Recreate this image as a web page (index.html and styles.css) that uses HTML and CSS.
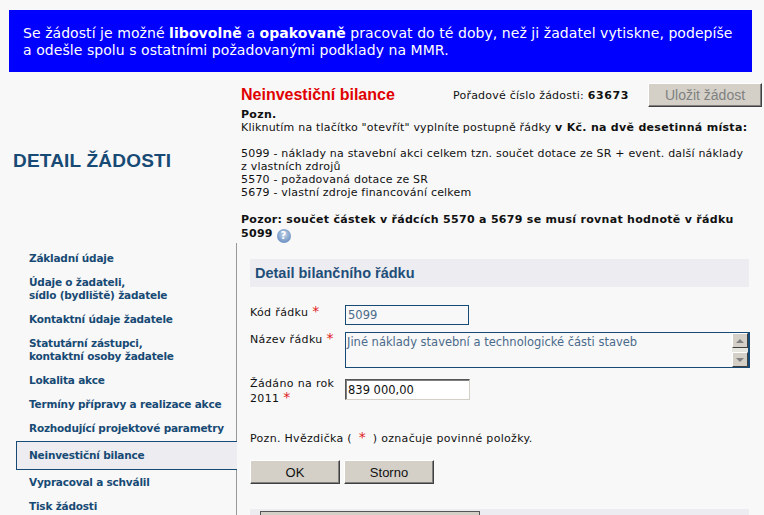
FILE: index.html
```html
<!DOCTYPE html>
<html lang="cs">
<head>
<meta charset="utf-8">
<title>Detail žádosti</title>
<link rel="stylesheet" href="styles.css">
</head>
<body>
<div class="banner">Se žádostí je možné <b>libovolně</b> a <b>opakovaně</b> pracovat do té doby, než ji žadatel vytiskne, podepíše<br>a odešle spolu s ostatními požadovanými podklady na MMR.</div>
<div class="layout">
  <aside class="side">
    <h1 class="side-title">DETAIL ŽÁDOSTI</h1>
    <nav class="nav">
      <a class="nav-item">Základní údaje</a>
      <a class="nav-item">Údaje o žadateli,<br>sídlo (bydliště) žadatele</a>
      <a class="nav-item">Kontaktní údaje žadatele</a>
      <a class="nav-item">Statutární zástupci,<br>kontaktní osoby žadatele</a>
      <a class="nav-item">Lokalita akce</a>
      <a class="nav-item">Termíny přípravy a realizace akce</a>
      <a class="nav-item">Rozhodující projektové parametry</a>
      <a class="nav-item active">Neinvestiční bilance</a>
      <a class="nav-item">Vypracoval a schválil</a>
      <a class="nav-item">Tisk žádosti</a>
    </nav>
  </aside>
  <main class="main">
    <div class="head">
      <h2 class="page-title">Neinvestiční bilance</h2>
      <div class="order">Pořadové číslo žádosti: <b>63673</b></div>
      <button class="btn btn-save" type="button" disabled>Uložit žádost</button>
    </div>
    <div class="intro">
      <p><b>Pozn.</b><br>Kliknutím na tlačítko "otevřít" vyplníte postupně řádky <b>v Kč. na dvě desetinná místa:</b></p>
      <p>5099 - náklady na stavební akci celkem tzn. součet dotace ze SR + event. další náklady<br>z vlastních zdrojů<br>5570 - požadovaná dotace ze SR<br>5679 - vlastní zdroje financování celkem</p>
      <p class="warn"><b>Pozor: součet částek v řádcích 5570 a 5679 se musí rovnat hodnotě v řádku<br>5099</b> <span class="help">?</span></p>
    </div>
    <section class="panel">
      <h3 class="panel-title">Detail bilančního řádku</h3>
      <div class="form">
        <label class="label">Kód řádku <span class="req">*</span></label>
        <input class="field field-code" type="text" value="5099" readonly>
        <label class="label">Název řádku <span class="req">*</span></label>
        <div class="area">
          <div class="area-text">Jiné náklady stavební a technologické části staveb</div>
          <div class="scroll">
            <span class="scroll-btn"><i class="arrow up"></i></span>
            <span class="scroll-track"></span>
            <span class="scroll-btn"><i class="arrow down"></i></span>
          </div>
        </div>
        <label class="label label-two">Žádáno na rok 2011 <span class="req">*</span></label>
        <input class="field field-amount" type="text" value="839 000,00">
      </div>
      <p class="note">Pozn. Hvězdička ( <span class="req req-note">*</span> ) označuje povinné položky.</p>
      <div class="actions">
        <button class="btn btn-form" type="button">OK</button>
        <button class="btn btn-form" type="button">Storno</button>
      </div>
      <div class="lower"><span class="lower-btn"></span></div>
    </section>
  </main>
</div>
</body>
</html>
```
FILE: styles.css
```css
* { box-sizing: border-box; }
html, body { height: 515px; overflow: hidden; }
body {
  margin: 0;
  background: #f8f8f8;
  color: #111;
  font: 11px/13px "DejaVu Sans", Verdana, sans-serif;
}
.banner {
  margin: 10px 12px 0 9px;
  height: 62px;
  padding: 15px 14px 0;
  background: #0000ff;
  color: #fff;
  font-size: 14px;
  line-height: 17px;
  letter-spacing: 0.06px;
  white-space: nowrap;
}
.layout {
  display: grid;
  grid-template-columns: 237px 1fr;
}
.side { display: flex; flex-direction: column; }
.side-title {
  margin: 78px 0 0 13px;
  height: 93px;
  color: #174a74;
  font: bold 19px/22px "Liberation Sans", Arial, sans-serif;
  letter-spacing: 0.2px;
}
.nav {
  margin-left: 16px;
  border-right: 1px solid #999;
  padding-top: 9px;
  height: 272px;
}
.nav-item {
  display: block;
  padding: 0 0 11px 13px;
  color: #174a74;
  font-weight: bold;
  font-size: 10.5px;
  letter-spacing: -0.2px;
  line-height: 13px;
  white-space: nowrap;
}
.nav-item.active {
  margin: -5px -1px 6px 0;
  padding: 7px 0 7px 12px;
  background: #ededf1;
  border: 1px solid #174a74;
  border-right: 0;
}
.main { padding: 11px 2px 0 4px; }
.head { display: flex; align-items: center; height: 24px; }
.page-title {
  margin: 0;
  width: 212px;
  color: #e00000;
  font: bold 16px/24px "Liberation Sans", Arial, sans-serif;
}
.order { width: 195px; letter-spacing: 0.22px; }
.order b { letter-spacing: 0.6px; }
.btn {
  padding: 0;
  background: #d4d0c8;
  border: 1px solid;
  border-color: #fff #404040 #404040 #fff;
  box-shadow: inset -1px -1px 0 #808080;
  color: #111;
  font: 13px "Liberation Sans", Arial, sans-serif;
}
.btn-save { width: 114px; height: 24px; color: #808080; font-size: 14px; }
.intro { margin-top: 1px; letter-spacing: 0.2px; white-space: nowrap; }
.intro b { letter-spacing: 0.3px; }
.intro p { margin: 0 0 13px; }
.intro .warn { margin: 14px 0 0; line-height: 14px; }
.help {
  display: inline-block;
  width: 14px;
  height: 14px;
  border-radius: 50%;
  background: radial-gradient(circle at 50% 40%, #c7d6ea, #6f94c4 70%, #9db6d6);
  color: #fff;
  font-size: 10px;
  font-weight: bold;
  line-height: 14px;
  text-align: center;
  vertical-align: -2px;
}
.panel { margin: 16px 13px 0 9px; }
.panel-title {
  margin: 0;
  height: 28px;
  padding-left: 5px;
  background: #ededf1;
  color: #1f4e79;
  font: bold 14.5px/28px "Liberation Sans", Arial, sans-serif;
}
.form {
  display: grid;
  grid-template-columns: 95px 1fr;
  row-gap: 7px;
  margin-top: 18px;
  align-items: start;
  letter-spacing: 0.35px;
}
.label-two { line-height: 15px; margin-top: 1px; }
.req { color: #e02020; font-size: 14px; line-height: 13px; }
.req-note { margin: 0 3px; }
.field {
  display: block;
  padding: 0 2px;
  color: #111;
  font: 11.5px "DejaVu Sans", Verdana, sans-serif;
  outline: 0;
}
.field-code {
  width: 124px;
  height: 20px;
  background: #f8f8f8;
  border: 1px solid #174a74;
  color: #4a6a8a;
}
.field-amount {
  width: 125px;
  height: 21px;
  margin-top: 4px;
  background: #fff;
  border: 1px solid;
  border-color: #555 #d4d0c8 #d4d0c8 #555;
  box-shadow: inset 1px 1px 0 #808080;
}
.area {
  display: flex;
  justify-content: space-between;
  height: 36px;
  margin-right: -1px;
  background: #f8f8f8;
  border: 1px solid #174a74;
  border-right-width: 2px;
}
.area-text { padding: 2px 1px; color: #4a6a8a; font-size: 11.5px; line-height: 15px; letter-spacing: 0; }
.scroll { display: flex; flex-direction: column; width: 16px; }
.scroll-btn {
  display: flex;
  align-items: center;
  justify-content: center;
  height: 15px;
  background: #d4d0c8;
  border: 1px solid;
  border-color: #fff #404040 #404040 #fff;
}
.scroll-track { flex: 1; background: #e8e6e0; }
.arrow { width: 0; height: 0; border-left: 4px solid transparent; border-right: 4px solid transparent; }
.arrow.up { border-bottom: 4px solid #808080; }
.arrow.down { border-top: 4px solid #808080; }
.note { margin: 25px 0 0; letter-spacing: 0.3px; }
.actions { display: flex; gap: 4px; margin-top: 15px; }
.btn-form { width: 90px; height: 24px; font-size: 13px; }
.lower { height: 20px; margin-top: 25px; padding: 2px 0 0 10px; background: #ededf1; }
.lower-btn { display: block; width: 220px; height: 12px; background: #d4d0c8; border: 1px solid #555; border-bottom: 0; }
```
